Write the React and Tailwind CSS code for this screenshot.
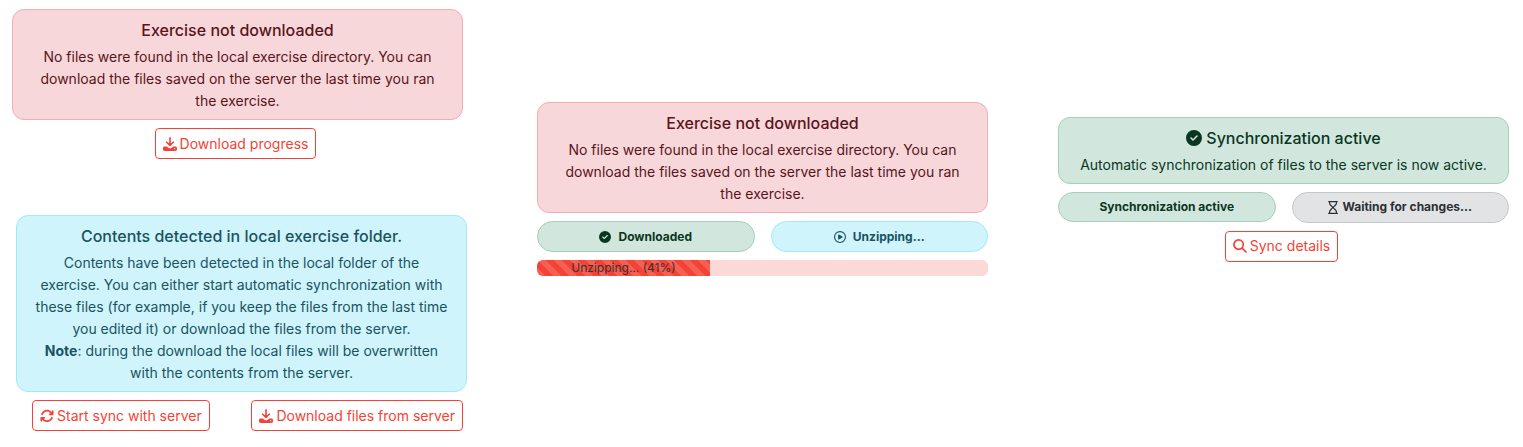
import { FaArrowsRotate, FaCircleCheck, FaRegCirclePlay, FaRegHourglass } from "react-icons/fa6";

const tones = {
  danger: "bg-[#f8d7da] border-[#f1aeb5] text-[#58151c]",
  info: "bg-[#cff4fc] border-[#9eeaf9] text-[#1a5361]",
  success: "bg-[#d1e7dd] border-[#a3cfbb] text-[#0a3622]",
  neutral: "bg-[#e2e3e5] border-[#c4c8cb] text-[#2b2f32]",
};

function DownloadIcon() {
  return (
    <svg viewBox="0 0 14 14" className="size-3.5 shrink-0" aria-hidden="true">
      <path d="M7 .9v7.2M3.7 5.2 7 8.4l3.3-3.2" fill="none" stroke="currentColor" strokeWidth="1.6" strokeLinecap="round" strokeLinejoin="round" />
      <path
        d="M1.6 9.4h2.1l1.6 1.3c1 .8 2.4.8 3.4 0l1.6-1.3h2.1c.9 0 1.6.7 1.6 1.6v1.3c0 .9-.7 1.6-1.6 1.6H1.6c-.9 0-1.6-.7-1.6-1.6V11c0-.9.7-1.6 1.6-1.6zm10.1 1.7a.6.6 0 1 0 0 1.2.6.6 0 1 0 0-1.2z"
        fill="currentColor"
        fillRule="evenodd"
      />
    </svg>
  );
}

function SearchIcon() {
  return (
    <svg viewBox="0 0 14 14" className="size-3.5 shrink-0" fill="none" stroke="currentColor" strokeWidth="1.7" strokeLinecap="round" aria-hidden="true">
      <circle cx="5.6" cy="5.6" r="4.7" />
      <path d="M9.1 9.1 13 13" />
    </svg>
  );
}

function Alert({ tone, title, icon, children }) {
  return (
    <section className={`rounded-xl border px-4 pt-2 pb-[7px] text-center ${tones[tone]}`}>
      <h2 className="mb-1 flex items-center justify-center gap-1 text-base font-medium">
        {icon}
        {title}
      </h2>
      <p className="text-sm leading-[22px]">{children}</p>
    </section>
  );
}

function ActionButton({ icon, children }) {
  return (
    <button type="button" className="flex h-[31px] items-center gap-[3px] rounded border border-[#f44336] bg-white px-[7px] text-sm whitespace-nowrap text-[#f44336]">
      {icon}
      {children}
    </button>
  );
}

function Pill({ tone, icon, gap = "gap-[7px]", height = "h-[31px]", children }) {
  return (
    <div className={`flex flex-1 items-center justify-center rounded-full border text-xs font-bold ${height} ${gap} ${tones[tone]}`}>
      {icon}
      <span>{children}</span>
    </div>
  );
}

function NotDownloaded() {
  return (
    <Alert tone="danger" title="Exercise not downloaded">
      No files were found in the local exercise directory. You can download the files saved on the server the last time you ran the exercise.
    </Alert>
  );
}

function Progress({ value }) {
  return (
    <div role="progressbar" aria-label="Unzipping" aria-valuenow={value} aria-valuemin={0} aria-valuemax={100} className="h-4 overflow-hidden rounded-md bg-[#fbd9d7]">
      <div
        style={{ width: `${value * 0.935}%` }}
        className="flex h-full items-center justify-center bg-[#f44336] bg-[linear-gradient(45deg,rgba(255,255,255,.15)_25%,transparent_25%,transparent_50%,rgba(255,255,255,.15)_50%,rgba(255,255,255,.15)_75%,transparent_75%,transparent)] bg-size-[16px_16px] text-xs whitespace-nowrap text-[#333]"
      >
        Unzipping... ({value}%)
      </div>
    </div>
  );
}

export default function App() {
  return (
    <main className="grid grid-cols-[455fr_451fr_451fr] gap-[70px] bg-white pt-[9px] pr-3.5 pb-4 pl-3 font-['Inter','Liberation_Sans',sans-serif]">
      <div className="flex flex-col gap-14">
        <div className="flex flex-col gap-2 pr-1">
          <NotDownloaded />
          <div className="flex justify-center pr-1">
            <ActionButton icon={<DownloadIcon />}>Download progress</ActionButton>
          </div>
        </div>
        <div className="flex flex-col gap-2 pl-1">
          <Alert tone="info" title="Contents detected in local exercise folder.">
            Contents have been detected in the local folder of the exercise. You can either start automatic synchronization with these files (for example, if you keep the files from the last time you edited it) or download the files from the server.
            <br />
            <strong>Note</strong>: during the download the local files will be overwritten with the contents from the server.
          </Alert>
          <div className="flex justify-between pr-1 pl-4">
            <ActionButton icon={<FaArrowsRotate className="size-3.5 shrink-0" />}>Start sync with server</ActionButton>
            <ActionButton icon={<DownloadIcon />}>Download files from server</ActionButton>
          </div>
        </div>
      </div>

      <div className="flex flex-col gap-2 self-center pb-[62px]">
        <NotDownloaded />
        <div className="flex gap-4">
          <Pill tone="success" icon={<FaCircleCheck className="size-3" />}>Downloaded</Pill>
          <Pill tone="info" icon={<FaRegCirclePlay className="size-3" />}>Unzipping...</Pill>
        </div>
        <Progress value={41} />
      </div>

      <div className="flex flex-col gap-2 self-center pb-[62px]">
        <Alert tone="success" title="Synchronization active" icon={<FaCircleCheck className="size-4" />}>
          Automatic synchronization of files to the server is now active.
        </Alert>
        <div className="flex items-start gap-4">
          <Pill tone="success" height="h-[30px]">Synchronization active</Pill>
          <Pill tone="neutral" gap="gap-1" icon={<FaRegHourglass className="h-[13px] w-2.5" />}>Waiting for changes...</Pill>
        </div>
        <div className="flex justify-center pr-1">
          <ActionButton icon={<SearchIcon />}>Sync details</ActionButton>
        </div>
      </div>
    </main>
  );
}
